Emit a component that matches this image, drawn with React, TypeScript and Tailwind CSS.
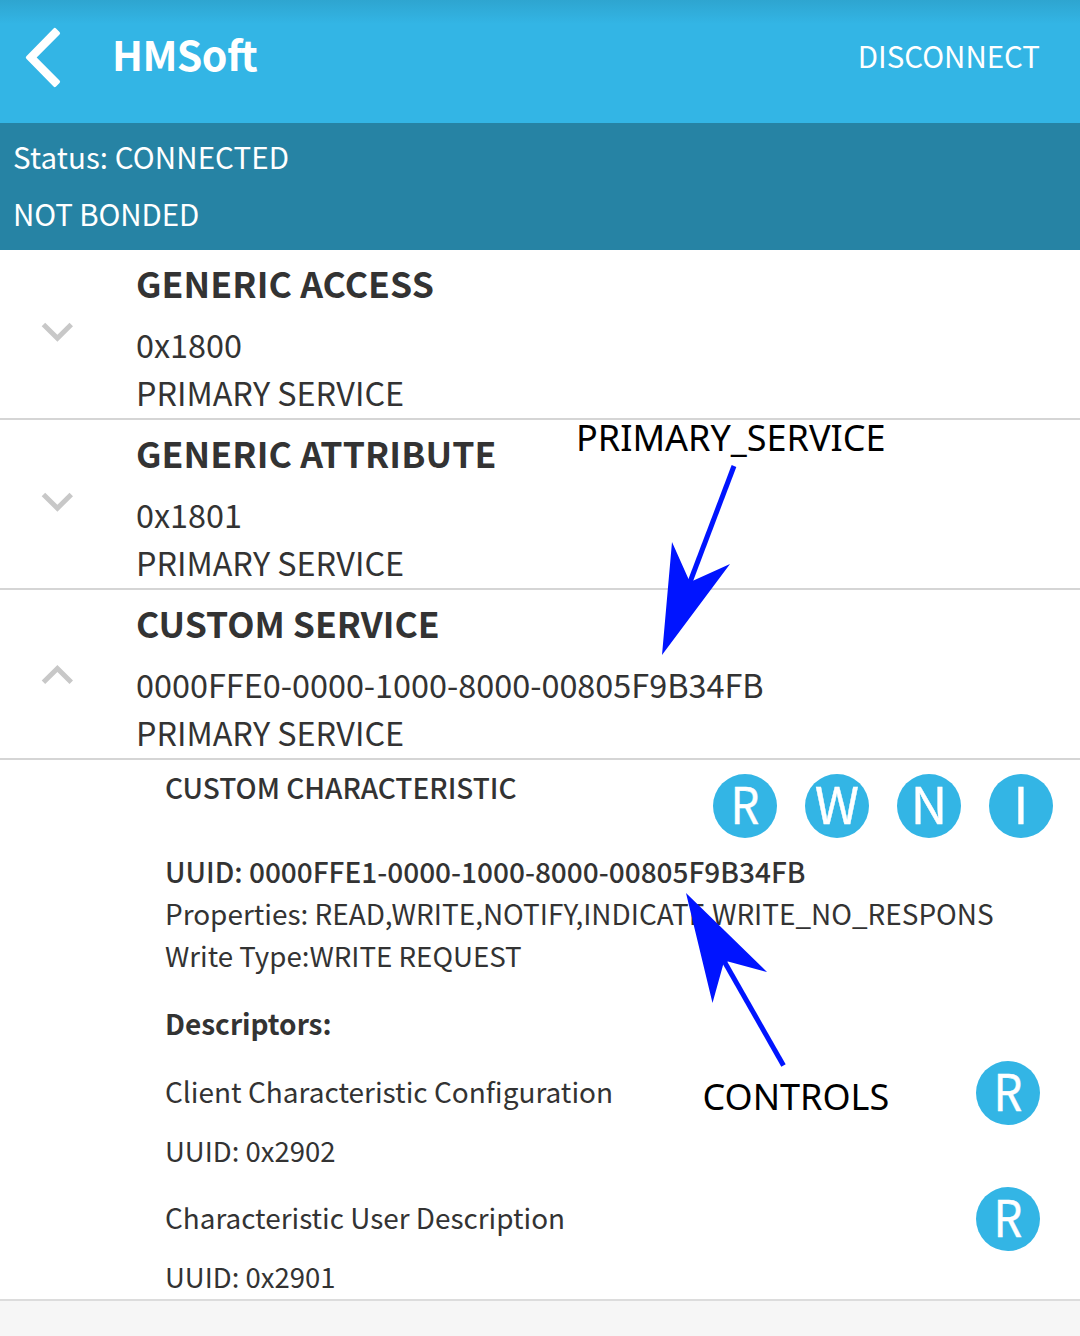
import React from "react";

type CircleProps = { letter: string };

function Circle({ letter }: CircleProps) {
  return (
    <button className="flex h-16 w-16 shrink-0 items-start justify-center rounded-full bg-[#33b5e5] text-[50.5px] leading-[57px] text-white [-webkit-text-stroke:0.4px_white]">
      <span className={letter === "R" ? "block scale-x-[0.9]" : "block"}>{letter}</span>
    </button>
  );
}

function Chevron({ up }: { up?: boolean }) {
  return (
    <svg width="33" height="20" viewBox="0 0 33 20" fill="#c8c8c8">
      {up ? (
        <path d="M.7 15.5 4.2 19 16.4 7 28.5 19 32 15.5 16.4 0Z" />
      ) : (
        <path d="M.7 4.2 4.2.7 16.4 12.7 28.5.7 32 4.2 16.4 19.7Z" />
      )}
    </svg>
  );
}

type ServiceProps = { name: string; uuid: string; open?: boolean };

function Service({ name, uuid, open }: ServiceProps) {
  return (
    <section className="flex h-[170px] border-b-2 border-[#d5d5d5]">
      <div className={open ? "w-[136px] shrink-0 pl-[41px] pt-[75px]" : "w-[136px] shrink-0 pl-[41px] pt-[72px]"}>
        <Chevron up={open} />
      </div>
      <div className="whitespace-nowrap text-[#333]">
        <h2
          className={
            open
              ? "h-[70px] text-[35.5px] font-bold leading-[65px]"
              : "h-[70px] text-[35.6px] font-bold leading-[65px] tracking-[0.1px]"
          }
        >
          {name}
        </h2>
        <p className="text-[32.4px] leading-[48px]">{uuid}</p>
        <p className="text-[32.35px] leading-[48px]">PRIMARY SERVICE</p>
      </div>
    </section>
  );
}

export default function App() {
  return (
    <main className="relative h-[1336px] w-[1080px] overflow-hidden bg-white font-['Noto_Sans_CJK_SC',sans-serif]">
      <header className="flex h-[123px] items-start bg-[#33b5e5] bg-[linear-gradient(#2ea5d0,#33b5e5_24px)] pl-[25px] pr-10 text-white">
        <svg
          className="mt-[27px]"
          width="36"
          height="61"
          viewBox="0 0 36 61"
          fill="white"
          stroke="white"
          strokeWidth="3.5"
          strokeLinejoin="round"
        >
          <path d="M29.8 2.7 2.6 30.5 29.8 58.3 33.3 54.8 9.2 30.5 33.3 6.2Z" />
        </svg>
        <h1 className="ml-[51px] text-[41px] font-bold leading-[106px] tracking-[-0.6px]">
          HMSo<span className="tracking-[-1.7px]">ft</span>
        </h1>
        <span className="ml-auto text-[29.5px] leading-[111px]">DISCONNECT</span>
      </header>
      <div className="h-[127px] bg-[#2683a4] pl-[13px] pt-[5px] text-[29.5px] leading-[57px] text-white">
        <p className="tracking-[0.1px]">Status: CONNECTED</p>
        <p className="tracking-[-0.1px]">NOT BONDED</p>
      </div>
      <Service name="GENERIC ACCESS" uuid="0x1800" />
      <Service name="GENERIC ATTRIBUTE" uuid="0x1801" />
      <Service name="CUSTOM SERVICE" uuid="0000FFE0-0000-1000-8000-00805F9B34FB" open />
      <section className="h-[541px] whitespace-nowrap border-b-2 border-[#dcdcdc] pl-[165px] text-[28px] leading-[42px] text-[#333]">
        <div className="flex h-[90px]">
          <h3 className="pt-[6px] font-medium">CUSTOM CHARACTERISTIC</h3>
          <div className="ml-auto flex gap-7 pr-[27px] pt-[14px]">
            <Circle letter="R" />
            <Circle letter="W" />
            <Circle letter="N" />
            <Circle letter="I" />
          </div>
        </div>
        <p className="font-medium">UUID: 0000FFE1-0000-1000-8000-00805F9B34FB</p>
        <p className="text-[27.93px]">Properties: READ,WRITE,NOTIFY,INDICATE,WRITE_NO_RESPONS</p>
        <p className="text-[27.7px]">Write Type:WRITE REQUEST</p>
        <h3 className="mt-[26px] font-bold">Descriptors:</h3>
        <div className="mt-[17px] flex h-[126px] justify-between pr-10">
          <div>
            <p className="pt-[9px]">Client Characteristic Configuration</p>
            <p className="pt-[17px] text-[27.5px]">UUID: 0x2902</p>
          </div>
          <Circle letter="R" />
        </div>
        <div className="flex h-[112px] justify-between pr-10">
          <div>
            <p className="pt-[9px] text-[27.9px]">Characteristic User Description</p>
            <p className="pt-[17px] text-[27.5px]">UUID: 0x2901</p>
          </div>
          <Circle letter="R" />
        </div>
      </section>
      <footer className="h-[35px] bg-[#f6f6f6]" />
      <svg className="absolute left-0 top-0" width="1080" height="1336" viewBox="0 0 1080 1336" fill="#0014ff">
        <path d="M734 466 690 582" stroke="#0014ff" strokeWidth="5" />
        <path d="M662 655 672 542 688.5 579 693.5 580.5 730 564Z" />
        <path d="M783.5 1065.5 724 961" stroke="#0014ff" strokeWidth="5" />
        <path d="M686 893 767 972 728 961.5 723.5 963.5 712.5 1003Z" />
      </svg>
      <span className="absolute left-[576px] top-[413px] font-['Noto_Sans',sans-serif] text-[36px] leading-[49px] text-black">PRIMARY_SERVICE</span>
      <span className="absolute left-[702.5px] top-[1072px] font-['Noto_Sans',sans-serif] text-[36px] leading-[49px] text-black">CONTROLS</span>
    </main>
  );
}
